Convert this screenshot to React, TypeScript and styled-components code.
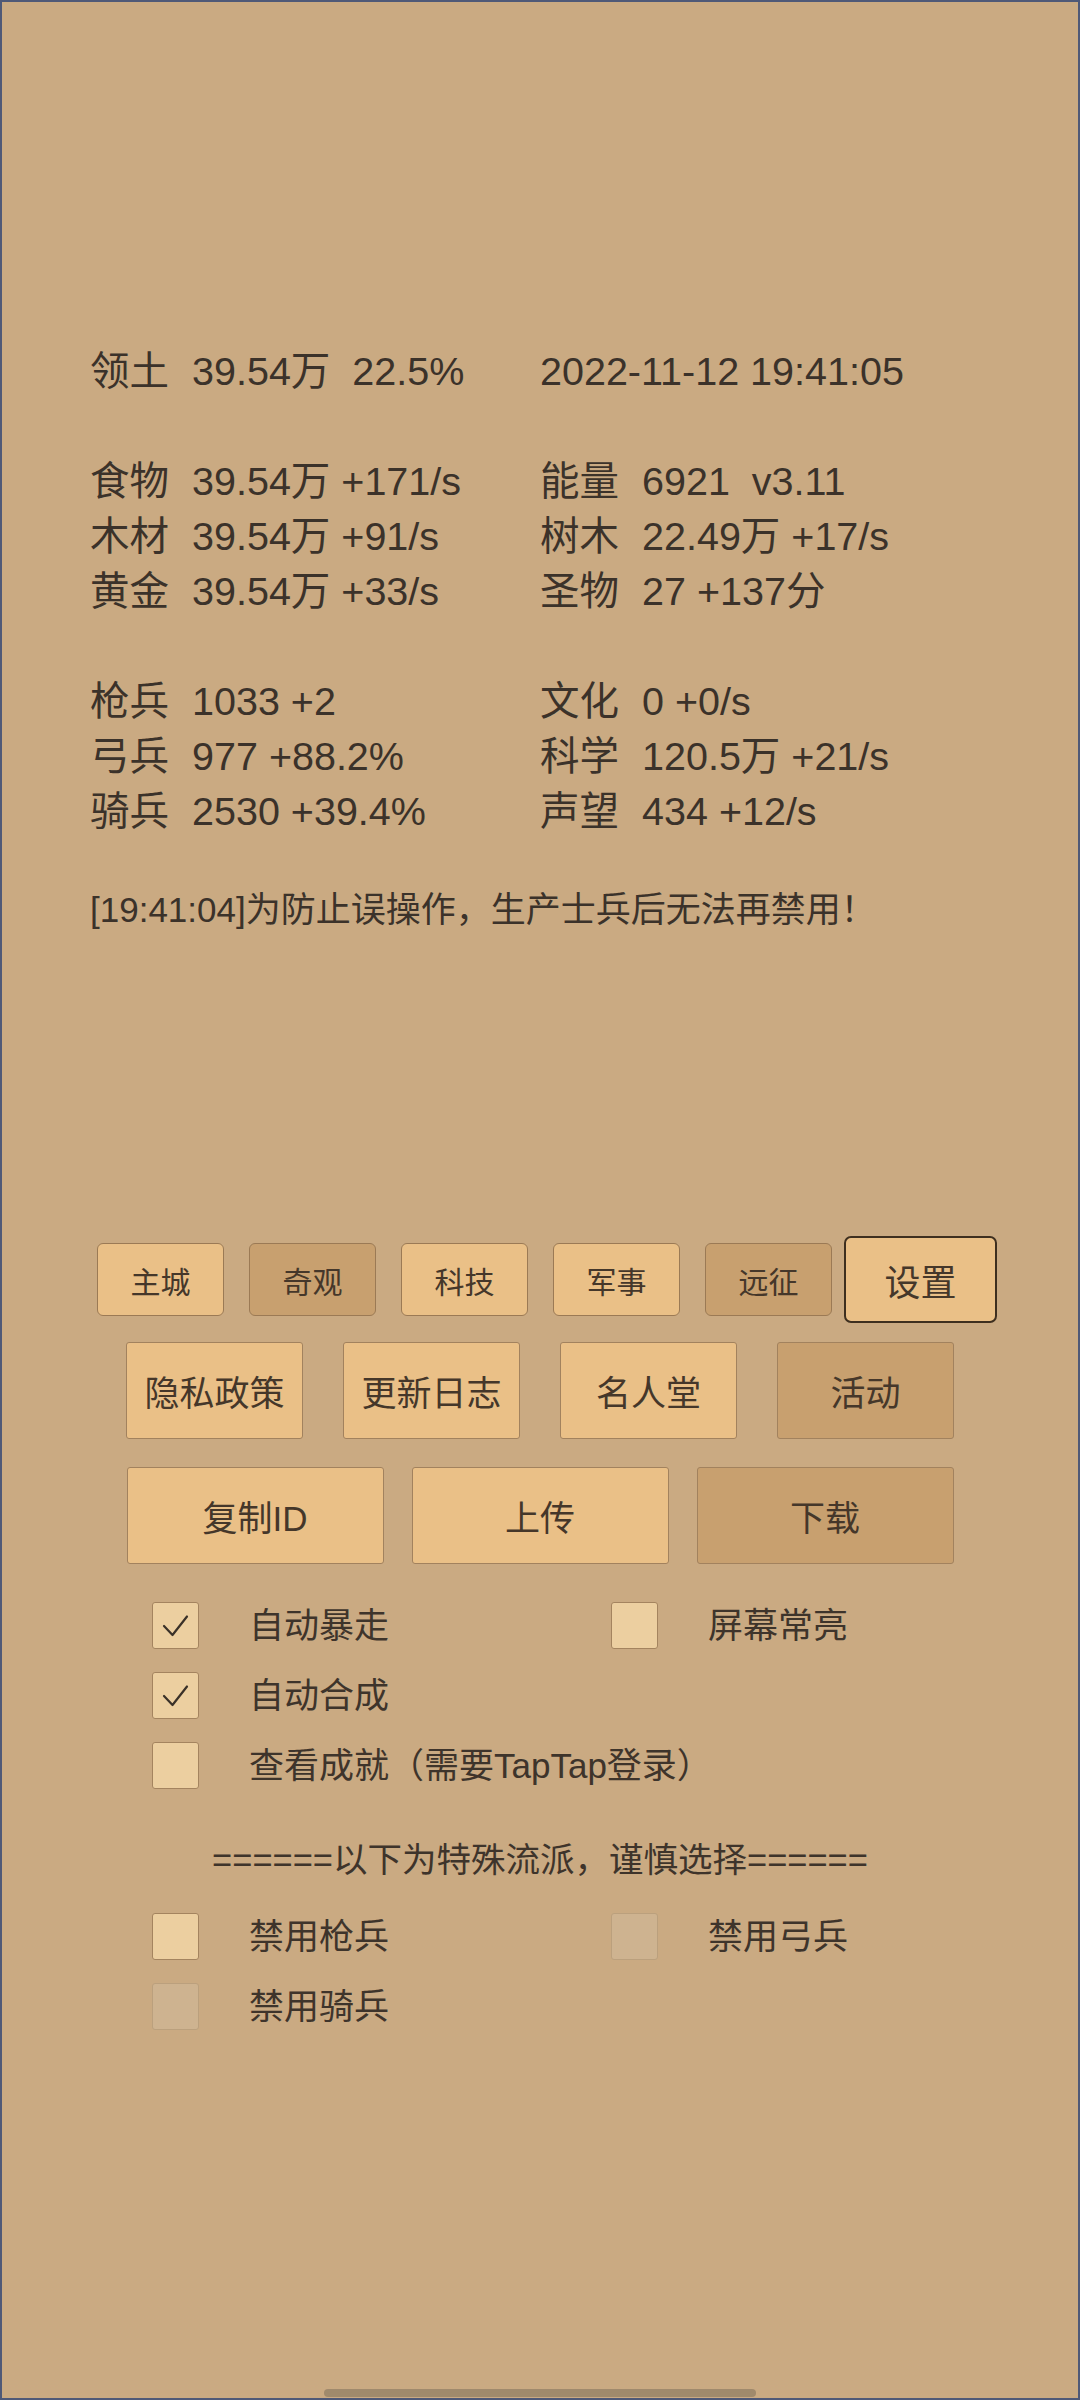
import React from 'react';
import styled, { createGlobalStyle } from 'styled-components';

const Global = createGlobalStyle`
  html, body { margin: 0; padding: 0; background: #caaa82; }
  body { font-family: "Liberation Sans", "Noto Sans CJK SC", sans-serif; }
  * { box-sizing: border-box; }
`;

const Page = styled.div`
  width: 1080px;
  height: 2400px;
  border: 2px solid #4f5977;
  background: #caaa82;
  display: flex;
  flex-direction: column;
  padding-top: 342px;
  color: #3b322a;
`;

const Stats = styled.div`
  display: grid;
  grid-template-columns: 450px 450px;
  grid-auto-rows: 55px;
  margin-left: 88px;
  font-size: 39.5px;
  line-height: 55px;
`;

const Blank = styled.div`
  grid-column: 1 / -1;
`;

const Stat = styled.div`
  white-space: pre;
`;

const Label = styled.span``;

const Value = styled.span`
  margin-left: 23px;
`;

const Message = styled.div`
  margin: 46px 0 0 88px;
  font-size: 35px;
  line-height: 50px;
  white-space: nowrap;
`;

const TabRow = styled.div`
  display: flex;
  align-items: center;
  margin-top: 301px;
  padding-left: 95px;
`;

const TabGroup = styled.div`
  display: flex;
  gap: 25px;
`;

const Tab = styled.div<{ $dark?: boolean }>`
  width: 127px;
  height: 73px;
  display: flex;
  align-items: center;
  justify-content: center;
  border: 1.5px solid #9b7a55;
  border-radius: 6px;
  background: ${p => (p.$dark ? '#c8a06f' : '#eac087')};
  font-size: 30px;
  color: #45372a;
`;

const SettingsButton = styled.div`
  width: 153px;
  height: 87px;
  margin-left: 12px;
  display: flex;
  align-items: center;
  justify-content: center;
  border: 2px solid #3e2f1f;
  border-radius: 7px;
  background: #eac087;
  font-size: 36px;
  color: #45372a;
`;

const ButtonRow = styled.div<{ $gap: number; $top: number }>`
  display: flex;
  justify-content: center;
  gap: ${p => p.$gap}px;
  margin-top: ${p => p.$top}px;
`;

const BigButton = styled.div<{ $dark?: boolean; $w: number }>`
  width: ${p => p.$w}px;
  height: 97px;
  display: flex;
  align-items: center;
  justify-content: center;
  border: 1px solid #a2825e;
  border-radius: 3px;
  background: ${p => (p.$dark ? '#c8a06f' : '#eac087')};
  font-size: 35px;
  color: #45372a;
`;

const CheckGrid = styled.div<{ $top: number }>`
  display: grid;
  grid-template-columns: 459px auto;
  row-gap: 23px;
  margin-top: ${p => p.$top}px;
  padding-left: 150px;
`;

const CheckItem = styled.div`
  display: flex;
  align-items: center;
  height: 47px;
`;

const Box = styled.div<{ $disabled?: boolean }>`
  position: relative;
  width: 47px;
  height: 47px;
  flex: none;
  margin-right: 50px;
  border: 1px solid ${p => (p.$disabled ? '#bba07d' : '#a4845f')};
  border-radius: 3px;
  background: ${p => (p.$disabled ? '#ceb390' : '#eccfa0')};
  svg {
    position: absolute;
    left: -1px;
    top: -1px;
  }
`;

const CheckLabel = styled.span`
  font-size: 35px;
  line-height: 47px;
  color: #3e342b;
  white-space: nowrap;
`;

const Divider = styled.div`
  margin-top: 46px;
  text-align: center;
  font-size: 34.5px;
  line-height: 50px;
  color: #3e342b;
`;

const HomeBar = styled.div`
  margin: auto auto 1px;
  width: 432px;
  height: 8px;
  border-radius: 4px;
  background: #a08a6c;
`;

const Check = () => (
  <svg width="47" height="47" viewBox="0 0 47 47">
    <path d="M12 24 L20.5 33 L35 14.5" fill="none" stroke="#3a3128" strokeWidth="2.2" strokeLinecap="round" strokeLinejoin="round" />
  </svg>
);

const CheckBox = ({ label, checked, disabled }: { label: string; checked?: boolean; disabled?: boolean }) => (
  <CheckItem>
    <Box $disabled={disabled}>{checked && <Check />}</Box>
    <CheckLabel>{label}</CheckLabel>
  </CheckItem>
);

const S = ({ l, v }: { l: string; v: string }) => (
  <Stat>
    <Label>{l}</Label>
    <Value>{v}</Value>
  </Stat>
);

export default function App() {
  return (
    <>
      <Global />
      <Page>
        <Stats>
          <S l="领土" v="39.54万  22.5%" />
          <Stat>2022-11-12 19:41:05</Stat>
          <Blank />
          <S l="食物" v="39.54万 +171/s" />
          <S l="能量" v="6921  v3.11" />
          <S l="木材" v="39.54万 +91/s" />
          <S l="树木" v="22.49万 +17/s" />
          <S l="黄金" v="39.54万 +33/s" />
          <S l="圣物" v="27 +137分" />
          <Blank />
          <S l="枪兵" v="1033 +2" />
          <S l="文化" v="0 +0/s" />
          <S l="弓兵" v="977 +88.2%" />
          <S l="科学" v="120.5万 +21/s" />
          <S l="骑兵" v="2530 +39.4%" />
          <S l="声望" v="434 +12/s" />
        </Stats>
        <Message>[19:41:04]为防止误操作，生产士兵后无法再禁用！</Message>

        <TabRow>
          <TabGroup>
            <Tab>主城</Tab>
            <Tab $dark>奇观</Tab>
            <Tab>科技</Tab>
            <Tab>军事</Tab>
            <Tab $dark>远征</Tab>
          </TabGroup>
          <SettingsButton>设置</SettingsButton>
        </TabRow>

        <ButtonRow $gap={40} $top={19}>
          <BigButton $w={177}>隐私政策</BigButton>
          <BigButton $w={177}>更新日志</BigButton>
          <BigButton $w={177}>名人堂</BigButton>
          <BigButton $w={177} $dark>活动</BigButton>
        </ButtonRow>

        <ButtonRow $gap={28} $top={28}>
          <BigButton $w={257}>复制ID</BigButton>
          <BigButton $w={257}>上传</BigButton>
          <BigButton $w={257} $dark>下载</BigButton>
        </ButtonRow>

        <CheckGrid $top={38}>
          <CheckBox label="自动暴走" checked />
          <CheckBox label="屏幕常亮" />
          <CheckBox label="自动合成" checked />
          <div />
          <CheckBox label="查看成就（需要TapTap登录）" />
          <div />
        </CheckGrid>

        <Divider>======以下为特殊流派，谨慎选择======</Divider>

        <CheckGrid $top={28}>
          <CheckBox label="禁用枪兵" />
          <CheckBox label="禁用弓兵" disabled />
          <CheckBox label="禁用骑兵" disabled />
        </CheckGrid>

        <HomeBar />
      </Page>
    </>
  );
}
